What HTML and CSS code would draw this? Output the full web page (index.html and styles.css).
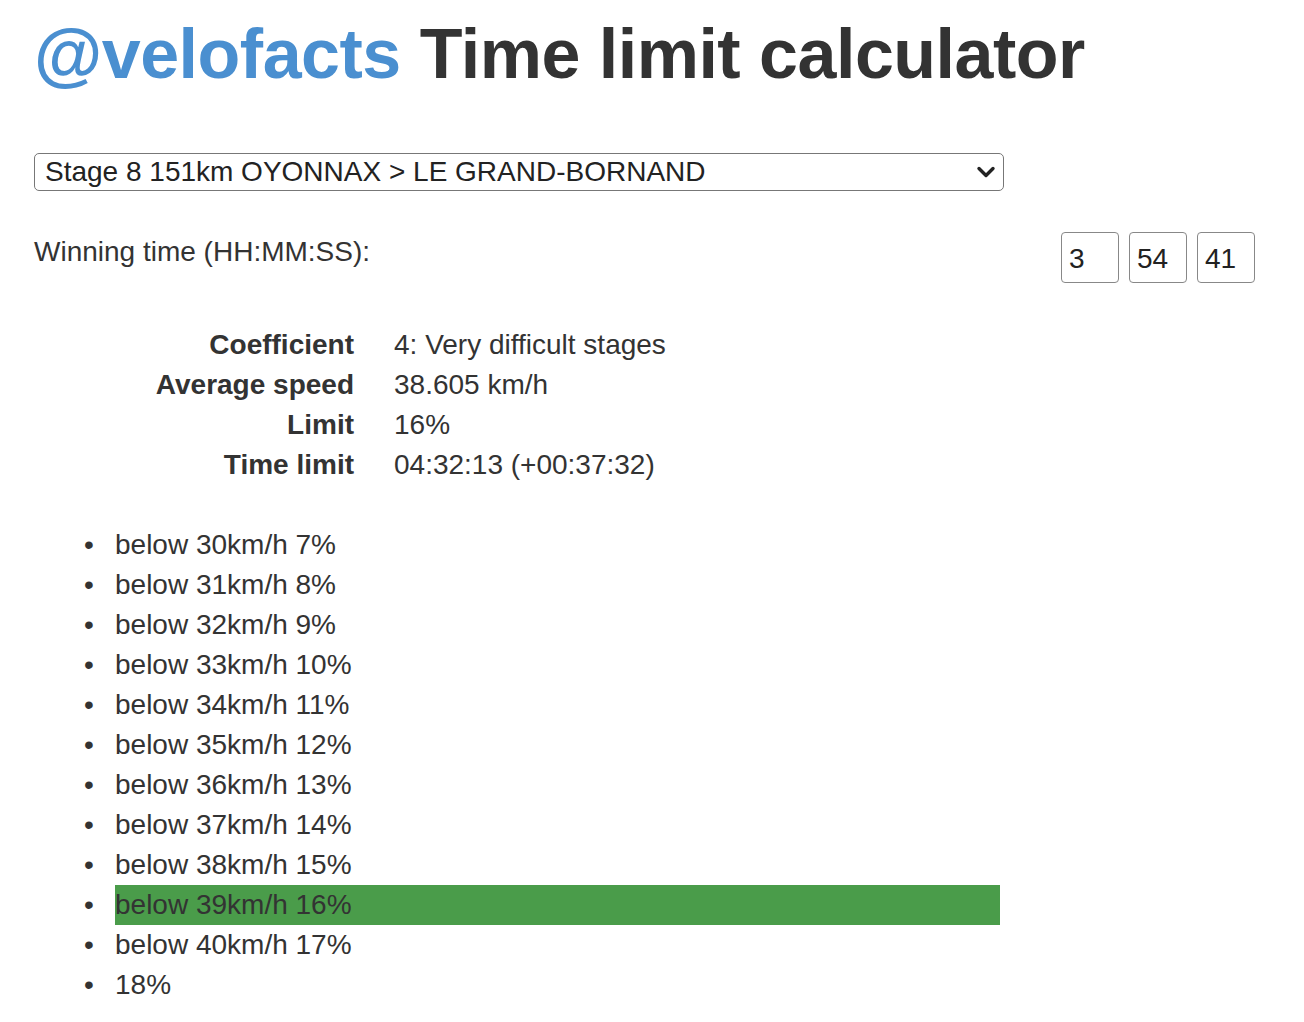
FILE: index.html
```html
<!DOCTYPE html>
<html>
<head>
<meta charset="utf-8">
<link rel="stylesheet" href="styles.css">
</head>
<body>
<h1 class="title"><span class="brand">@velofacts</span> Time limit calculator</h1>
<div class="select-wrap">
  <div class="select">Stage 8 151km OYONNAX &gt; LE GRAND-BORNAND</div>
  <svg class="caret" width="20" height="14" viewBox="0 0 20 14"><path d="M3 3.5 L10 10.5 L17 3.5" fill="none" stroke="#222" stroke-width="3.4" stroke-linecap="round" stroke-linejoin="round"/></svg>
</div>
<div class="time-row">
  <div class="label">Winning time (HH:MM:SS):</div>
  <div class="inputs">
    <div class="field">3</div>
    <div class="field">54</div>
    <div class="field">41</div>
  </div>
</div>
<dl class="facts">
  <dt>Coefficient</dt><dd>4: Very difficult stages</dd>
  <dt>Average speed</dt><dd>38.605 km/h</dd>
  <dt>Limit</dt><dd>16%</dd>
  <dt>Time limit</dt><dd>04:32:13 (+00:37:32)</dd>
</dl>
<ul class="speeds">
  <li>below 30km/h 7%</li>
  <li>below 31km/h 8%</li>
  <li>below 32km/h 9%</li>
  <li>below 33km/h 10%</li>
  <li>below 34km/h 11%</li>
  <li>below 35km/h 12%</li>
  <li>below 36km/h 13%</li>
  <li>below 37km/h 14%</li>
  <li>below 38km/h 15%</li>
  <li class="active">below 39km/h 16%</li>
  <li>below 40km/h 17%</li>
  <li>18%</li>
</ul>
</body>
</html>
```
FILE: styles.css
```css
html, body {
  margin: 0;
  background: #fff;
}
body {
  padding: 0 49px 0 34px;
  color: #333;
  font-family: "Liberation Sans", Arial, Helvetica, sans-serif;
  font-size: 28px;
  line-height: 40px;
}
.title {
  margin: 15px 0 0 0;
  font-size: 70px;
  line-height: 79px;
  letter-spacing: -0.5px;
  font-weight: bold;
  color: #333;
}
.brand {
  color: #4a8fd0;
}
.select-wrap {
  position: relative;
  width: 970px;
  margin-top: 59px;
}
.select {
  box-sizing: border-box;
  height: 38px;
  border: 1.5px solid #777;
  border-radius: 5px;
  padding: 0 10px;
  line-height: 35px;
  color: #222;
}
.caret {
  position: absolute;
  right: 8px;
  top: 12px;
}
.time-row {
  margin-top: 41px;
  display: flex;
  justify-content: space-between;
  align-items: flex-start;
}
.inputs {
  display: flex;
  gap: 10px;
}
.field {
  box-sizing: border-box;
  width: 58px;
  height: 51px;
  border: 1.5px solid #888;
  border-radius: 4px;
  padding: 1px 7px 0;
  line-height: 49px;
  color: #222;
}
.facts {
  margin: 42px 0 0 0;
  display: grid;
  grid-template-columns: 320px 1fr;
  column-gap: 40px;
}
.facts dt {
  text-align: right;
  font-weight: bold;
}
.facts dd {
  margin: 0;
}
.speeds {
  margin: 40px 0 0 0;
  width: 966px;
  box-sizing: border-box;
  padding-left: 81px;
  list-style: none;
}
.speeds li {
  position: relative;
}
.speeds li::before {
  content: "\2022";
  position: absolute;
  left: -31px;
  top: 0;
  color: #333;
}
.speeds li.active {
  background: #4a9c4a;
}
```
